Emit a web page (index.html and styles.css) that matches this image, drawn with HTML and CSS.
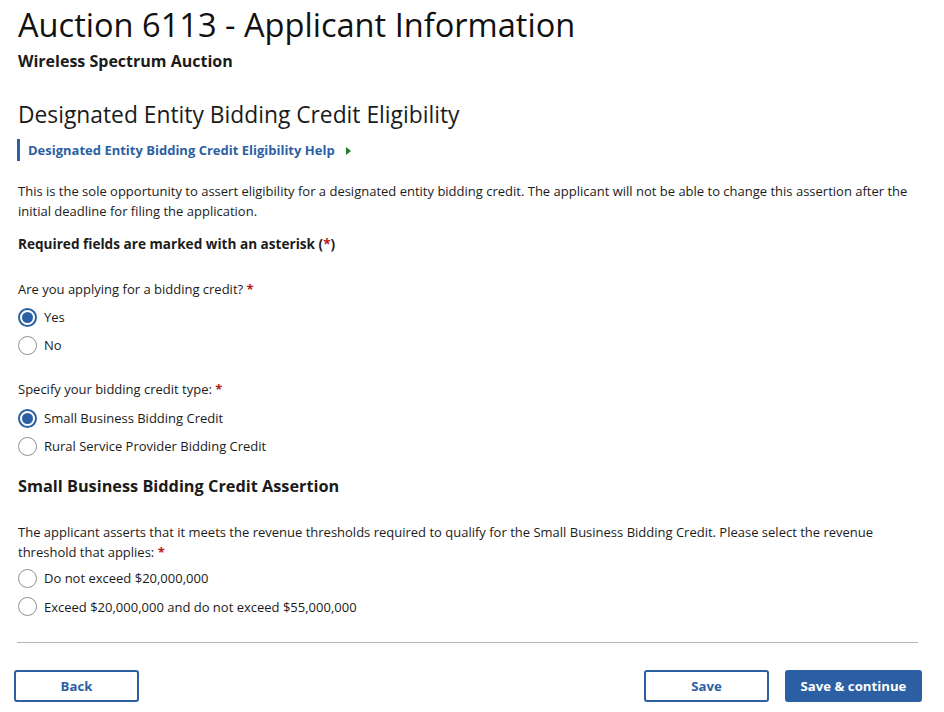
FILE: index.html
```html
<!DOCTYPE html>
<html lang="en">
<head>
<meta charset="utf-8">
<title>Auction 6113 - Applicant Information</title>
<link rel="stylesheet" href="styles.css">
</head>
<body>
<main class="page">
  <header class="page-head">
    <h1 class="title">Auction 6113 - Applicant Information</h1>
    <div class="subtitle">Wireless Spectrum Auction</div>
  </header>

  <section class="section">
    <h2 class="section-title">Designated Entity Bidding Credit Eligibility</h2>
    <div class="help">
      <span class="help-text">Designated Entity Bidding Credit Eligibility Help</span>
      <svg class="help-arrow" width="5" height="8" viewBox="0 0 5 8"><polygon points="0,0 5,4 0,8" fill="#1e7d2a"/></svg>
    </div>
    <p class="intro">This is the sole opportunity to assert eligibility for a designated entity bidding credit. The applicant will not be able to change this assertion after the initial deadline for filing the application.</p>
    <p class="required">Required fields are marked with an asterisk (<span class="star">*</span>)</p>

    <fieldset class="group">
      <legend class="question">Are you applying for a bidding credit? <span class="star">*</span></legend>
      <label class="option"><span class="radio checked"></span><span>Yes</span></label>
      <label class="option"><span class="radio"></span><span>No</span></label>
    </fieldset>

    <fieldset class="group group-second">
      <legend class="question">Specify your bidding credit type: <span class="star">*</span></legend>
      <label class="option"><span class="radio checked"></span><span>Small Business Bidding Credit</span></label>
      <label class="option"><span class="radio"></span><span>Rural Service Provider Bidding Credit</span></label>
    </fieldset>

    <h3 class="sub-title">Small Business Bidding Credit Assertion</h3>

    <fieldset class="group group-last">
      <legend class="question question-long">The applicant asserts that it meets the revenue thresholds required to qualify for the Small Business Bidding Credit. Please select the revenue threshold that applies:&nbsp;<span class="star">*</span></legend>
      <label class="option"><span class="radio"></span><span>Do not exceed $20,000,000</span></label>
      <label class="option"><span class="radio"></span><span>Exceed $20,000,000 and do not exceed $55,000,000</span></label>
    </fieldset>
  </section>

  <hr class="divider">

  <footer class="actions">
    <button class="btn btn-outline btn-back">Back</button>
    <div class="actions-right">
      <button class="btn btn-outline btn-save">Save</button>
      <button class="btn btn-primary">Save &amp; continue</button>
    </div>
  </footer>
</main>
</body>
</html>
```

FILE: styles.css
```css
* { box-sizing: border-box; }
html, body { margin: 0; padding: 0; background: #fff; }
body {
  font-family: "Open Sans", "Noto Sans", sans-serif;
  color: #1b1b1b;
  font-size: 13px;
}
.page {
  padding: 0 26px 0 17px;
}
.page-head { padding-top: 3px; }
.title {
  margin: 0;
  font-size: 32.6px;
  font-weight: 400;
  line-height: 44px;
  color: #111;
  padding-left: 1px;
}
.subtitle {
  font-size: 16px;
  font-weight: 700;
  line-height: 22px;
  margin-top: 3px;
  padding-left: 1px;
}
.section { padding-left: 1px; }
.section-title {
  margin: 27px 0 0 0;
  font-size: 22.8px;
  font-weight: 400;
  line-height: 32px;
}
.help {
  margin-top: 8px;
  margin-left: -1px;
  border-left: 3px solid #2c5fa3;
  height: 22px;
  display: flex;
  align-items: center;
  padding-left: 8px;
  gap: 11px;
}
.help-text {
  color: #2c5fa3;
  font-weight: 700;
  font-size: 13px;
}
.help-arrow { margin-top: 1px; }
.intro {
  margin: 20px 0 0 0;
  line-height: 20px;
}
.required {
  margin: 13px 0 0 0;
  font-weight: 700;
  font-size: 13.6px;
  line-height: 20px;
}
.star { color: #b31b1b; font-weight: 700; }
.group {
  border: 0;
  margin: 25px 0 0 0;
  padding: 0;
  min-width: 0;
}
.group-second { margin-top: 20px; }
.group-second .question { margin-bottom: 5px; }
.question {
  padding: 0;
  line-height: 20px;
  margin-bottom: 4px;
}
.question-long { line-height: 19.5px; margin-bottom: 2px; }
.option {
  display: flex;
  align-items: center;
  gap: 7px;
  height: 28px;
}
.radio {
  width: 19px;
  height: 19px;
  border-radius: 50%;
  border: 1.5px solid #8f8f8f;
  background: #fff;
  flex: none;
  position: relative;
}
.radio.checked {
  border: 2px solid #2c5fa3;
}
.radio.checked::after {
  content: "";
  position: absolute;
  left: 2px; top: 2px;
  width: 11px; height: 11px;
  border-radius: 50%;
  background: #2c5fa3;
}
.sub-title {
  margin: 14px 0 0 0;
  font-size: 16.3px;
  font-weight: 700;
  line-height: 24px;
}
.group-last { margin-top: 25px; }
.group-last .option:last-child { height: 29px; }
.divider {
  border: 0;
  border-top: 1px solid #b5b5b5;
  margin: 21px 0 0 0;
}
.actions {
  display: flex;
  justify-content: space-between;
  margin-top: 27px;
  margin-left: -3px;
  margin-right: -4px;
}
.actions-right { display: flex; gap: 16px; }
.btn {
  font-family: "Open Sans", "Noto Sans", sans-serif;
  font-size: 13.2px;
  font-weight: 700;
  height: 32px;
  border-radius: 3px;
  cursor: pointer;
}
.btn-outline {
  background: #fff;
  color: #2c5fa3;
  border: 2px solid #2c5fa3;
  width: 125px;
}
.btn-primary {
  background: #2c5fa3;
  color: #fff;
  border: 2px solid #2c5fa3;
  width: 137px;
}
```
